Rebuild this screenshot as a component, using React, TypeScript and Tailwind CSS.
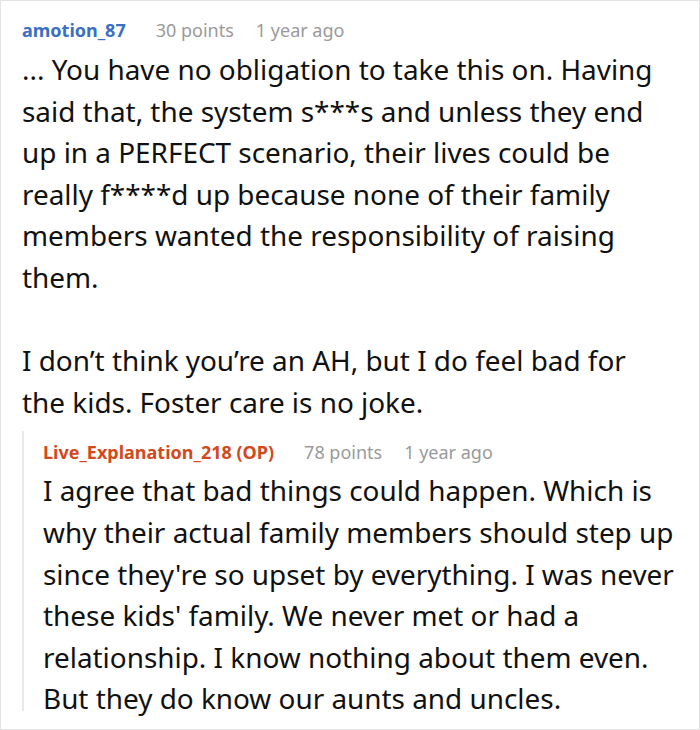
import React from "react";

export default function App() {
  return (
    <div
      className="w-[700px] h-[730px] bg-white border border-[#e3e3e3] overflow-hidden"
      style={{ fontFamily: '"Noto Sans", "Open Sans", sans-serif' }}
    >
      <div className="pl-[21px] pr-[8px] pt-[17px]">
        <div className="flex items-center h-[24px] text-[18px] leading-[24px] whitespace-nowrap">
          <span className="font-bold text-[#3a6fc4]">amotion_87</span>
          <span className="ml-[30px] text-[#9a9a9a]">30 points</span>
          <span className="ml-[22px] text-[#9a9a9a]">1 year ago</span>
        </div>
        <div className="mt-[7px] w-[640px] text-[27.9px] leading-[41.6px] text-[#111]">
          <p>
            ... You have no obligation to take this on. Having said that, the system s***s and unless they end up in a PERFECT scenario, their lives could be really f****d up because none of their family members wanted the responsibility of raising them.
          </p>
          <p className="mt-[41.6px]">
            I don’t think you’re an AH, but I do feel bad for the kids. Foster care is no joke.
          </p>
        </div>
        <div className="mt-[8px] border-l-2 border-[#e8e8e8] pl-[19px] pt-[9px] h-[280px]">
          <div className="flex items-center h-[24px] text-[18px] leading-[24px] whitespace-nowrap">
            <span className="font-bold text-[#d2491c]">Live_Explanation_218 (OP)</span>
            <span className="ml-[30px] text-[#9a9a9a]">78 points</span>
            <span className="ml-[22px] text-[#9a9a9a]">1 year ago</span>
          </div>
          <p className="mt-[6px] w-[640px] text-[27.9px] leading-[41.6px] text-[#111]">
            I agree that bad things could happen. Which is why their actual family members should step up since they're so upset by everything. I was never these kids' family. We never met or had a relationship. I know nothing about them even. But they do know our aunts and uncles.
          </p>
        </div>
      </div>
    </div>
  );
}
